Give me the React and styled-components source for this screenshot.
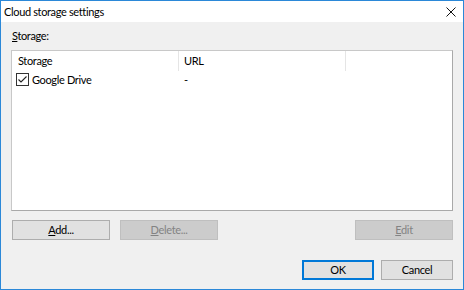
import React from "react";
import styled, { createGlobalStyle } from "styled-components";

const FONT = `Lato, "Noto Sans", sans-serif`;

const Global = createGlobalStyle`
  html, body { margin: 0; padding: 0; background: #ffffff; }
  body { font-family: ${FONT}; font-size: 11px; letter-spacing: -0.35px; color: #000; }
`;

const Window = styled.div`
  width: 464px;
  height: 290px;
  box-sizing: border-box;
  border: 1px solid #2b88d8;
  display: flex;
  flex-direction: column;
  background: #f0f0f0;
  overflow: hidden;
`;

const TitleBar = styled.div`
  height: 21px;
  flex: none;
  background: #ffffff;
  display: flex;
  align-items: center;
  justify-content: space-between;
  padding: 0 7px 0 3px;
`;

const Title = styled.span`
  font-size: 11px;
  line-height: 16px;
  color: #000;
`;

const CloseIcon = styled.svg`
  display: block;
  width: 10px;
  height: 10px;
`;

const Body = styled.div`
  flex: 1;
  display: flex;
  flex-direction: column;
  padding: 6px 10px 9px 10px;
`;

const Label = styled.div`
  height: 16px;
  line-height: 16px;
  padding-left: 1px;
  margin-bottom: 6px;
`;

const ListBox = styled.div`
  height: 161px;
  box-sizing: border-box;
  background: #ffffff;
  border: 1px solid #a9a9a9;
  border-top-color: #c8c8c8;
  border-left-color: #c8c8c8;
  display: flex;
  flex-direction: column;
`;

const Row = styled.div`
  display: grid;
  grid-template-columns: 167px 167px 1fr;
  height: ${(p) => (p.$header ? "20px" : "17px")};
`;

const Cell = styled.div`
  display: flex;
  align-items: center;
  gap: 3px;
  padding-left: ${(p) => p.$pad || 6}px;
  border-right: ${(p) => (p.$divider ? "1px solid #e5e5e5" : "none")};
  line-height: 16px;
  white-space: nowrap;
`;

const CheckSvg = styled.svg`
  display: block;
  width: 13px;
  height: 13px;
  flex: none;
`;

const ButtonRow = styled.div`
  display: flex;
  gap: 10px;
  margin-top: 9px;
  padding-left: 1px;
`;

const Spacer = styled.div`
  flex: 1;
`;

const Button = styled.button`
  width: ${(p) => p.$w || 98}px;
  height: 20px;
  box-sizing: border-box;
  margin: 0;
  padding: 0;
  font-family: ${FONT};
  font-size: 11px;
  letter-spacing: -0.35px;
  line-height: 16px;
  color: ${(p) => (p.disabled ? "#838383" : "#000")};
  background: ${(p) => (p.disabled ? "#cccccc" : "#e1e1e1")};
  border: ${(p) =>
    p.$default ? "2px solid #0078d7" : p.disabled ? "1px solid #bfbfbf" : "1px solid #adadad"};
  border-radius: 0;
`;

const FooterRow = styled.div`
  display: flex;
  justify-content: flex-end;
  gap: 7px;
  margin-top: 20px;
`;

const Ul = styled.span`
  text-decoration: underline;
`;

export default function App() {
  return (
    <>
      <Global />
      <Window>
        <TitleBar>
          <Title>Cloud storage settings</Title>
          <CloseIcon viewBox="0 0 10 10">
            <path d="M0.5 0.5 L9.5 9.5 M9.5 0.5 L0.5 9.5" stroke="#111" strokeWidth="1" fill="none" />
          </CloseIcon>
        </TitleBar>
        <Body>
          <Label>
            <Ul>S</Ul>torage:
          </Label>
          <ListBox>
            <Row $header>
              <Cell $divider>Storage</Cell>
              <Cell $divider $pad={5}>URL</Cell>
              <Cell />
            </Row>
            <Row>
              <Cell $pad={4}>
                <CheckSvg viewBox="0 0 13 13">
                  <rect x="0.5" y="0.5" width="12" height="12" fill="#fff" stroke="#333" />
                  <path d="M2.5 6.5 L5 9 L10.5 3.5" stroke="#222" strokeWidth="1.1" fill="none" />
                </CheckSvg>
                Google Drive
              </Cell>
              <Cell $pad={5}>-</Cell>
              <Cell />
            </Row>
          </ListBox>
          <ButtonRow>
            <Button>
              <Ul>A</Ul>dd...
            </Button>
            <Button disabled>
              <Ul>D</Ul>elete...
            </Button>
            <Spacer />
            <Button disabled>
              <Ul>E</Ul>dit
            </Button>
          </ButtonRow>
          <FooterRow>
            <Button $w={72} $default>OK</Button>
            <Button $w={72}>Cancel</Button>
          </FooterRow>
        </Body>
      </Window>
    </>
  );
}
